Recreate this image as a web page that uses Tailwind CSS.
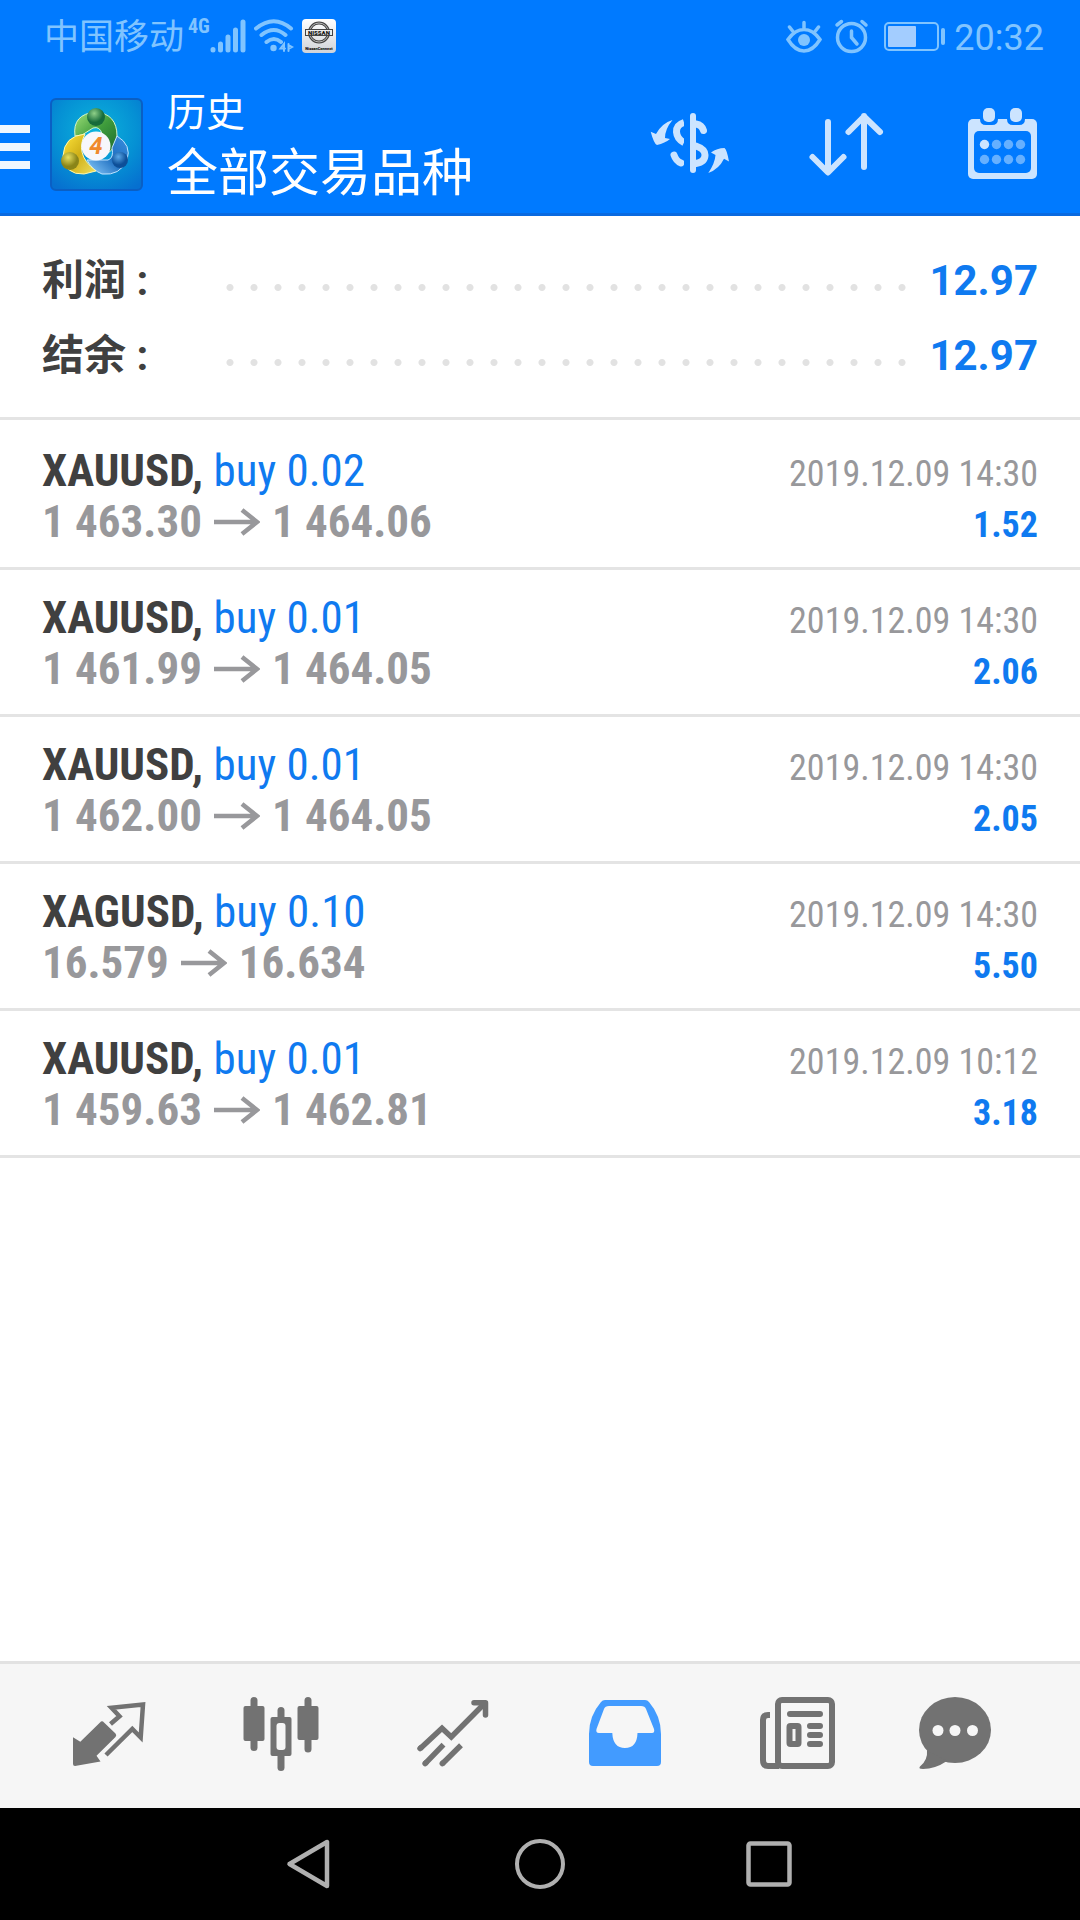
<!DOCTYPE html>
<html lang="zh-CN">
<head>
<meta charset="utf-8">
<meta name="viewport" content="width=device-width, initial-scale=1">
<title>历史</title>
<script src="https://cdn.jsdelivr.net/npm/@tailwindcss/browser@4"></script>
</head>
<body class="flex min-h-screen flex-col bg-white font-[Roboto,'Noto_Sans_CJK_SC',sans-serif]">

<header class="border-b-3 border-[#0a6ae0] bg-[#007aff]">
  <!-- Status bar -->
  <div class="flex h-18 items-center justify-between pr-9 pl-11 text-[#80c4ff]">
    <div class="flex items-center">
      <span class="pt-1 text-[35px] leading-[36px]">中国移动</span>
      <span class="ml-1 self-start text-[20px] leading-[20px] font-bold font-['Roboto_Condensed','Liberation_Sans_Narrow',Roboto,sans-serif]">4G</span>
      <svg class="h-9 w-9" viewBox="0 0 36 36" fill="none" stroke="currentColor" stroke-width="5" stroke-linecap="round" aria-label="信号"><path d="M3 31.5V32M10.500 26V32M18 19V32M25.500 12V32M33 4V32"/></svg>
      <svg class="ml-2 h-9 w-10" viewBox="0 0 40 36" fill="none" stroke="currentColor" stroke-width="4" stroke-linecap="round" aria-label="Wi-Fi"><path d="M2 10.500Q20-4 37 10.500M7.500 17Q20 7 31.500 17M12.500 24Q20 18 27 24"/><circle cx="19.500" cy="30" r="3.200" fill="currentColor" stroke="none"/><path stroke-width="2" d="M30 33V26L26.500 30.500H31M34.500 26V33M34.500 27L38 29L34.500 31"/></svg>
      <svg class="ml-2 size-[34px]" viewBox="0 0 34 34" aria-label="NissanConnect"><defs><linearGradient id="n" x1="0" y1="0" x2="0" y2="1"><stop stop-color="#fff"/><stop offset="1" stop-color="#d0d3d8"/></linearGradient></defs><rect width="34" height="34" rx="4" fill="url(#n)"/><circle cx="17" cy="13.500" r="9.500" fill="none" stroke="#444" stroke-width="3"/><circle cx="17" cy="13.500" r="9.500" fill="none" stroke="#bbb" stroke-width="1"/><rect x="3.500" y="10.500" width="27" height="6" fill="#eee" stroke="#444" stroke-width="1"/><text x="17" y="15.500" text-anchor="middle" font-size="6" font-weight="900" font-family="Roboto" fill="#111">NISSAN</text><text x="17" y="31" text-anchor="middle" font-size="4" font-weight="900" font-family="Roboto" fill="#111">NissanConnect</text></svg>
    </div>
    <div class="flex items-center">
      <svg class="h-9 w-9" viewBox="0 0 36 36" fill="none" stroke="currentColor" stroke-width="3.500" stroke-linecap="round" aria-label="护眼模式"><path d="M2 21.500Q9 11.500 18 11.500T34 21.500Q27 33 18 33T2 21.500ZM18 11V4.500M7 13.500L3.500 9M29 13.500L32.500 9"/><circle cx="18" cy="22" r="6" fill="currentColor" stroke="none"/></svg>
      <svg class="ml-3 h-9 w-9" viewBox="0 0 36 36" fill="none" stroke="currentColor" stroke-width="3.500" stroke-linecap="round" aria-label="闹钟"><circle cx="17.500" cy="19.500" r="14"/><path d="M17.500 13V19.500L23 26M3 7L7.500 3.500M28 3.500L32 7"/></svg>
      <svg class="ml-3 h-9 w-16" viewBox="0 0 64 36" aria-label="电量"><rect x="3" y="5" width="53" height="27" rx="4" fill="none" stroke="currentColor" stroke-width="2"/><rect x="6" y="8" width="28" height="21" rx="1" fill="#a3cdff"/><rect x="59" y="10" width="4" height="17" rx="2" fill="currentColor"/></svg>
      <time class="ml-2 pt-1 text-[36px] leading-[36px]">20:32</time>
    </div>
  </div>

  <!-- Toolbar -->
  <div class="flex h-[141px] items-center justify-between pr-9">
    <div class="flex items-center">
      <button type="button" aria-label="菜单" class="flex w-[30px] flex-col gap-[10px] pt-2">
        <span class="h-2 bg-[#f0f7ff]"></span><span class="h-2 bg-[#f0f7ff]"></span><span class="h-2 bg-[#f0f7ff]"></span>
      </button>
      <svg class="mt-1 ml-5 size-[93px]" viewBox="0 0 93 93" aria-label="MetaTrader 4">
        <defs>
          <radialGradient id="bg" cx=".5" cy=".35" r=".75"><stop stop-color="#0cb4dc"/><stop offset=".6" stop-color="#0590d4"/><stop offset="1" stop-color="#0670d0"/></radialGradient>
          <linearGradient id="g" x1="0" y1="0" x2="1" y2="1"><stop stop-color="#9fe07a"/><stop offset=".5" stop-color="#3f9c3c"/><stop offset="1" stop-color="#1c6a2e"/></linearGradient>
          <linearGradient id="y" x1="0" y1="0" x2="1" y2="1"><stop stop-color="#ffe53c"/><stop offset=".5" stop-color="#d0b018"/><stop offset="1" stop-color="#f0e060"/></linearGradient>
          <linearGradient id="b" x1="1" y1="0" x2="0" y2="1"><stop stop-color="#3a8fe0"/><stop offset=".5" stop-color="#1f6fc0"/><stop offset="1" stop-color="#8fd0ff"/></linearGradient>
          <radialGradient id="gh" cx=".4" cy=".3"><stop stop-color="#8fd088"/><stop offset="1" stop-color="#176b3a"/></radialGradient>
          <radialGradient id="yh" cx=".4" cy=".3"><stop stop-color="#e8e060"/><stop offset="1" stop-color="#8a8418"/></radialGradient>
          <radialGradient id="bh" cx=".4" cy=".3"><stop stop-color="#5aa8e8"/><stop offset="1" stop-color="#0d4f98"/></radialGradient>
        </defs>
        <rect x="1" y="1" width="91" height="91" rx="5" fill="url(#bg)" stroke="#0a5fc4" stroke-width="2"/>
        <path d="M25 38Q22 16 46 14Q67 16 67 38Q66 50 58 55L52 36Q50 28 43 30L32 37Z" fill="url(#g)" stroke="#d8f5c8" stroke-width="1"/>
        <path d="M67 38Q82 47 77 62Q70 78 52 76Q42 72 37 62L58 62Q64 60 62 50Z" fill="url(#b)" stroke="#bfe4ff" stroke-width="1"/>
        <path d="M35 36Q14 38 13 58Q15 77 34 76L46 73Q34 64 32 54Q30 46 35 36Z" fill="url(#y)" stroke="#fff8b0" stroke-width="1"/>
        <circle cx="46" cy="19" r="9" fill="url(#gh)"/><circle cx="20" cy="63" r="9" fill="url(#yh)"/><circle cx="70" cy="62" r="8" fill="url(#bh)"/>
        <circle cx="46" cy="48" r="14.500" fill="#f7f7fb"/>
        <text x="46" y="56" text-anchor="middle" font-size="24" font-weight="700" font-style="italic" font-family="Roboto" fill="#f08a2c">4</text>
      </svg>
      <h1 class="ml-6 flex flex-col pt-2 font-normal text-white">
        <span class="text-[39px] leading-[54px]">历史</span>
        <span class="text-[51px] leading-[68px]">全部交易品种</span>
      </h1>
    </div>
    <div class="flex gap-18 text-[#cce4ff]">
      <button type="button" aria-label="交易品种">
        <svg class="size-21" viewBox="0 0 84 84" fill="none" stroke="currentColor" stroke-width="7" stroke-linecap="round"><path stroke-width="6" d="M45 15V69"/><path stroke-linecap="butt" d="M36 21.500Q28 24 28.500 31Q29 38 36 41.500"/><path d="M26 54Q28 60 33 62"/><path d="M48 23Q54 24 55.500 29.500M48 45Q57 48 57 54Q57 61 48 62.500"/><rect x="36" y="16" width="6" height="52" fill="#007aff" stroke="none"/><path fill="currentColor" stroke="none" d="M24.500 19Q17 28 17 37L22 38Q17 42 9 44Q6 43 2.700 30.700L8 33Q14 22 24.500 19ZM60.300 72Q67 62 67.500 54L63 51.500Q69 47 76.500 47Q79 49 81 60.500L76 57.700Q71 68 60.300 72Z"/></svg>
      </button>
      <button type="button" aria-label="排序">
        <svg class="size-21" viewBox="0 0 84 84" fill="none" stroke="currentColor" stroke-width="6" stroke-linecap="round" stroke-linejoin="round"><path d="M24 21V71M8.500 56L24 71.500L39.500 56M60 66V15M44.500 31L60 15.500L76 31"/></svg>
      </button>
      <button type="button" aria-label="日期">
        <svg class="size-21" viewBox="0 0 84 84" fill="currentColor"><rect x="8" y="18" width="69" height="60" rx="5"/><rect x="14" y="30" width="57" height="42" rx="5" fill="#007aff"/><path fill="#007aff" d="M20 17H38V18Q38 24 32 24H26Q20 24 20 18ZM47 17H65V18Q65 24 59 24H53Q47 24 47 18Z"/><rect x="23" y="7" width="12" height="14" rx="5"/><rect x="50" y="7" width="12" height="14" rx="5"/><circle cx="24.500" cy="43.500" r="4.700"/><g fill="#66b0ff"><circle cx="36.500" cy="43.500" r="4.700"/><circle cx="48.500" cy="43.500" r="4.700"/><circle cx="60.500" cy="43.500" r="4.700"/><circle cx="24.500" cy="58.500" r="4.700"/><circle cx="36.500" cy="58.500" r="4.700"/><circle cx="48.500" cy="58.500" r="4.700"/><circle cx="60.500" cy="58.500" r="4.700"/></g></svg>
      </button>
    </div>
  </div>
</header>

<main class="flex-1">
  <!-- Totals -->
  <dl class="flex flex-col gap-[15px] border-b-3 border-[#e4e4e4] px-[42px] pt-[35px] pb-[31px] text-[42px] leading-[60px] font-bold">
    <div class="flex">
      <dt class="w-44 text-[#404040]">利润 :</dt>
      <span class="mt-[33px] h-[7px] flex-1 bg-[radial-gradient(circle,#e2e2e2_3px,transparent_4px)] bg-size-[24px_7px] bg-repeat-x"></span>
      <dd class="w-31 text-right text-[#0f7af0]">12.97</dd>
    </div>
    <div class="flex">
      <dt class="w-44 text-[#404040]">结余 :</dt>
      <span class="mt-[33px] h-[7px] flex-1 bg-[radial-gradient(circle,#e2e2e2_3px,transparent_4px)] bg-size-[24px_7px] bg-repeat-x"></span>
      <dd class="w-31 text-right text-[#0f7af0]">12.97</dd>
    </div>
  </dl>

  <!-- Closed deals -->
  <ul class="pt-[3px] font-['Roboto_Condensed','Liberation_Sans_Narrow',Roboto,sans-serif]">
    <li class="flex h-[147px] items-baseline justify-between border-b-3 border-[#e4e4e4] px-[42px] pt-[22px] leading-[51px]">
      <div class="text-[45px] font-bold"><p class="text-[#404040]">XAUUSD, <span class="font-normal text-[#0f7af0]">buy 0.02</span></p><p class="flex items-center text-[#98989b]">1 463.30<svg class="mx-3 h-7 w-[46px]" viewBox="0 0 46 28" fill="none" stroke="currentColor" stroke-width="4.500"><path d="M0 14H43M28 2L43 14L28 26"/></svg>1 464.06</p></div>
      <div class="text-right text-[36px]"><time class="block text-[#98989b]">2019.12.09 14:30</time><p class="font-bold text-[#0f7af0]">1.52</p></div>
    </li>
    <li class="flex h-[147px] items-baseline justify-between border-b-3 border-[#e4e4e4] px-[42px] pt-[22px] leading-[51px]">
      <div class="text-[45px] font-bold"><p class="text-[#404040]">XAUUSD, <span class="font-normal text-[#0f7af0]">buy 0.01</span></p><p class="flex items-center text-[#98989b]">1 461.99<svg class="mx-3 h-7 w-[46px]" viewBox="0 0 46 28" fill="none" stroke="currentColor" stroke-width="4.500"><path d="M0 14H43M28 2L43 14L28 26"/></svg>1 464.05</p></div>
      <div class="text-right text-[36px]"><time class="block text-[#98989b]">2019.12.09 14:30</time><p class="font-bold text-[#0f7af0]">2.06</p></div>
    </li>
    <li class="flex h-[147px] items-baseline justify-between border-b-3 border-[#e4e4e4] px-[42px] pt-[22px] leading-[51px]">
      <div class="text-[45px] font-bold"><p class="text-[#404040]">XAUUSD, <span class="font-normal text-[#0f7af0]">buy 0.01</span></p><p class="flex items-center text-[#98989b]">1 462.00<svg class="mx-3 h-7 w-[46px]" viewBox="0 0 46 28" fill="none" stroke="currentColor" stroke-width="4.500"><path d="M0 14H43M28 2L43 14L28 26"/></svg>1 464.05</p></div>
      <div class="text-right text-[36px]"><time class="block text-[#98989b]">2019.12.09 14:30</time><p class="font-bold text-[#0f7af0]">2.05</p></div>
    </li>
    <li class="flex h-[147px] items-baseline justify-between border-b-3 border-[#e4e4e4] px-[42px] pt-[22px] leading-[51px]">
      <div class="text-[45px] font-bold"><p class="text-[#404040]">XAGUSD, <span class="font-normal text-[#0f7af0]">buy 0.10</span></p><p class="flex items-center text-[#98989b]">16.579<svg class="mx-3 h-7 w-[46px]" viewBox="0 0 46 28" fill="none" stroke="currentColor" stroke-width="4.500"><path d="M0 14H43M28 2L43 14L28 26"/></svg>16.634</p></div>
      <div class="text-right text-[36px]"><time class="block text-[#98989b]">2019.12.09 14:30</time><p class="font-bold text-[#0f7af0]">5.50</p></div>
    </li>
    <li class="flex h-[147px] items-baseline justify-between border-b-3 border-[#e4e4e4] px-[42px] pt-[22px] leading-[51px]">
      <div class="text-[45px] font-bold"><p class="text-[#404040]">XAUUSD, <span class="font-normal text-[#0f7af0]">buy 0.01</span></p><p class="flex items-center text-[#98989b]">1 459.63<svg class="mx-3 h-7 w-[46px]" viewBox="0 0 46 28" fill="none" stroke="currentColor" stroke-width="4.500"><path d="M0 14H43M28 2L43 14L28 26"/></svg>1 462.81</p></div>
      <div class="text-right text-[36px]"><time class="block text-[#98989b]">2019.12.09 10:12</time><p class="font-bold text-[#0f7af0]">3.18</p></div>
    </li>
  </ul>
</main>

<!-- Tabs -->
<nav class="grid h-[147px] grid-cols-[172fr_172fr_172fr_172fr_172fr_144fr] border-t-3 border-[#e2e2e2] bg-[#f6f6f6] pr-[53px] pl-[23px] text-[#727272]">
  <button type="button" aria-label="行情" class="flex items-center justify-center">
    <svg class="size-20" viewBox="0 0 80 80" fill="currentColor"><path d="M4 41.300L11.300 45.700L31 26.500Q33 24 35 26.500L46.500 37.500Q48 39 46.500 41L27.500 59.700L31.500 65.500L6 70Q4 70 4 68Z"/><path fill="none" stroke="currentColor" stroke-width="4.500" d="M41.500 28L50.500 20.300L42.500 11.800L74 8.500L71.700 41.500L63.300 33L37 59"/></svg>
  </button>
  <button type="button" aria-label="图表" class="flex items-center justify-center">
    <svg class="size-20" viewBox="0 0 80 80" fill="currentColor"><rect x="2.500" y="10" width="21" height="35" rx="2"/><rect x="9.500" y="1" width="7" height="54" rx="3.500"/><rect x="56.500" y="10" width="21" height="34" rx="2"/><rect x="63.500" y="1" width="7" height="55.500" rx="3.500"/><rect x="36.500" y="11" width="7" height="64" rx="3.500"/><rect x="29.500" y="21" width="21" height="39" rx="2"/><rect x="35.500" y="27" width="9" height="27" rx="3" fill="#f6f6f6"/></svg>
  </button>
  <button type="button" aria-label="交易" class="flex items-center justify-center">
    <svg class="size-20" viewBox="0 0 80 80" fill="none" stroke="currentColor" stroke-width="5.500"><path d="M7 52.700L29 32.300L38.300 41L72 7"/><path stroke-linecap="round" stroke-linejoin="round" d="M61 6.700H72.500V19M7 52.500L8 51.600"/><path d="M12.100 67.700L30.500 48.700M29.300 67.700L48 49.300"/><path stroke-linecap="round" d="M12.100 67.500L13 66.600M29.300 67.500L30.200 66.600"/></svg>
  </button>
  <button type="button" aria-label="历史" aria-current="page" class="flex items-center justify-center text-[#429bff]">
    <svg class="size-20" viewBox="0 0 80 80" fill="currentColor" fill-rule="evenodd"><path d="M16 6Q17.500 4 20 4H60Q62.500 4 64 6Q76 20 76 38V66Q76 70 72 70H8Q4 70 4 66V38Q4 20 16 6ZM24 10Q20 10 19 13L11.500 33Q10.500 37 14 37H27.300Q28 52 40 52Q52 52 52.500 37H67Q70 37 69 33L61 13Q60 10 56 10Z"/></svg>
  </button>
  <button type="button" aria-label="新闻" class="flex items-center justify-center">
    <svg class="size-20" viewBox="0 0 80 80" fill="none" stroke="currentColor" stroke-width="6"><rect x="21" y="4" width="54" height="66" rx="4"/><path d="M13 19H11Q6 19 6 24V64Q6 70 11 70H22"/><path stroke-linecap="round" d="M33 18H63M53 30H63M53 39H63M53 48H63"/><rect x="32.500" y="30" width="9" height="18" rx="1"/></svg>
  </button>
  <button type="button" aria-label="消息" class="flex items-center justify-center">
    <svg class="size-20" viewBox="0 0 80 80" fill="currentColor"><ellipse cx="40" cy="34" rx="36" ry="33"/><path d="M12 54Q13 64 5 70.500Q3 73 8 73Q20 73 32 65Z"/><g fill="#f6f6f6"><circle cx="23" cy="34.500" r="5.500"/><circle cx="40" cy="34.500" r="5.500"/><circle cx="57.500" cy="34.500" r="5.500"/></g></svg>
  </button>
</nav>

<!-- System navigation -->
<nav class="flex h-28 items-center justify-center gap-[173px] bg-black text-[#b0b0b0]">
  <button type="button" aria-label="返回"><svg class="size-14" viewBox="0 0 56 56" fill="none" stroke="currentColor" stroke-width="4.500" stroke-linejoin="round"><path d="M6.500 28L44 6V50Z"/></svg></button>
  <button type="button" aria-label="主屏幕"><svg class="size-14" viewBox="0 0 56 56" fill="none" stroke="currentColor" stroke-width="4"><circle cx="28" cy="28" r="23"/></svg></button>
  <button type="button" aria-label="最近任务"><svg class="size-14" viewBox="0 0 56 56" fill="none" stroke="currentColor" stroke-width="4.500"><rect x="7.500" y="7.500" width="41" height="41" rx="2"/></svg></button>
</nav>
</body>
</html>
